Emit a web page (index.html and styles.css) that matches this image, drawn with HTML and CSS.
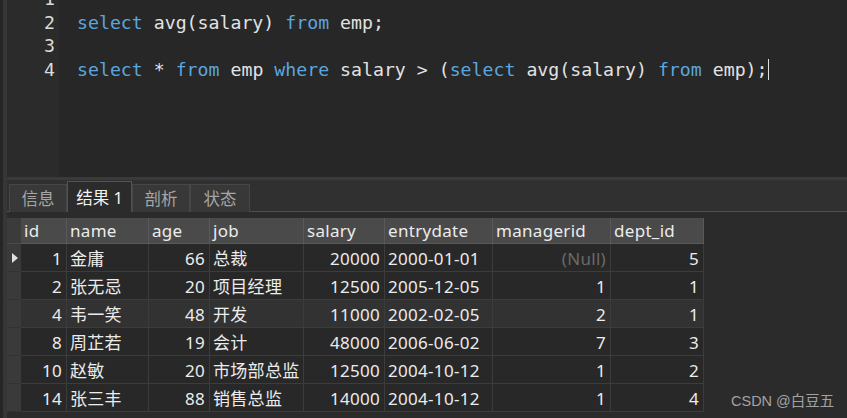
FILE: index.html
```html
<!DOCTYPE html>
<html>
<head>
<meta charset="utf-8">
<link rel="stylesheet" href="styles.css">
</head>
<body>
<div class="app">
  <div class="strip"></div>
  <div class="main">
    <div class="editor">
      <div class="gutter">
        <div class="ln">1</div>
        <div class="ln">2</div>
        <div class="ln">3</div>
        <div class="ln">4</div>
      </div>
      <div class="code">
        <div class="line"></div>
        <div class="line"><span class="kw">select</span> avg(salary) <span class="kw">from</span> emp;</div>
        <div class="line"></div>
        <div class="line"><span class="kw">select</span> * <span class="kw">from</span> emp <span class="kw">where</span> salary &gt; (<span class="kw">select</span> avg(salary) <span class="kw">from</span> emp);<span class="cursor"></span></div>
      </div>
    </div>
    <div class="sep"></div>
    <div class="tabbar">
      <div class="tab t1">信息</div>
      <div class="tab active t2">结果 1</div>
      <div class="tab t3">剖析</div>
      <div class="tab t4">状态</div>
    </div>
    <div class="results">
      <div class="grid">
        <div class="rh hdr"></div>
        <div class="c hdr">id</div>
        <div class="c hdr">name</div>
        <div class="c hdr">age</div>
        <div class="c hdr">job</div>
        <div class="c hdr">salary</div>
        <div class="c hdr">entrydate</div>
        <div class="c hdr">managerid</div>
        <div class="c hdr">dept_id</div>

        <div class="rh"><span class="ptr"></span></div>
        <div class="c r">1</div><div class="c">金庸</div><div class="c r">66</div><div class="c">总裁</div><div class="c r">20000</div><div class="c">2000-01-01</div><div class="c r null">(Null)</div><div class="c r">5</div>

        <div class="rh"></div>
        <div class="c r">2</div><div class="c">张无忌</div><div class="c r">20</div><div class="c">项目经理</div><div class="c r">12500</div><div class="c">2005-12-05</div><div class="c r">1</div><div class="c r">1</div>

        <div class="rh"></div>
        <div class="c r hl">4</div><div class="c hl">韦一笑</div><div class="c r hl">48</div><div class="c hl">开发</div><div class="c r hl">11000</div><div class="c hl">2002-02-05</div><div class="c r hl">2</div><div class="c r hl">1</div>

        <div class="rh"></div>
        <div class="c r">8</div><div class="c">周芷若</div><div class="c r">19</div><div class="c">会计</div><div class="c r">48000</div><div class="c">2006-06-02</div><div class="c r">7</div><div class="c r">3</div>

        <div class="rh"></div>
        <div class="c r">10</div><div class="c">赵敏</div><div class="c r">20</div><div class="c">市场部总监</div><div class="c r">12500</div><div class="c">2004-10-12</div><div class="c r">1</div><div class="c r">2</div>

        <div class="rh"></div>
        <div class="c r">14</div><div class="c">张三丰</div><div class="c r">88</div><div class="c">销售总监</div><div class="c r">14000</div><div class="c">2004-10-12</div><div class="c r">1</div><div class="c r">4</div>
      </div>
    </div>
  </div>
  <div class="watermark">CSDN @白豆五</div>
</div>
</body>
</html>
```

FILE: styles.css
```css
* { box-sizing: border-box; }
html, body {
  margin: 0;
  padding: 0;
  background: #2b2b2b;
}
.app {
  position: relative;
  width: 847px;
  height: 418px;
  overflow: hidden;
  display: flex;
  background: #2b2b2b;
}
.strip {
  width: 7px;
  flex: none;
  background: linear-gradient(to right, #262626 0, #262626 3px, #363636 3px, #363636 7px);
}
.main {
  flex: 1;
  display: flex;
  flex-direction: column;
}
.editor {
  height: 177px;
  display: flex;
  overflow: hidden;
  font-family: "DejaVu Sans Mono", "Liberation Mono", monospace;
  font-size: 18.22px;
}
.gutter {
  width: 52px;
  flex: none;
  background: #2b2b2b;
  padding-right: 4px;
  text-align: right;
  color: #dcdcdc;
}
.gutter .ln:first-child, .code .line:first-child {
  margin-top: -13px;
}
.ln, .line {
  height: 23.5px;
  line-height: 23.5px;
  white-space: pre;
}
.code {
  flex: 1;
  background: #272727;
  padding-left: 18px;
  color: #e2e2e2;
}
.kw { color: #5ba6de; }
.cursor {
  display: inline-block;
  width: 1px;
  height: 21px;
  background: #e0e0e0;
  vertical-align: middle;
  margin-top: -3px;
}
.sep {
  height: 3px;
  background: #3a3a3a;
}
.tabbar {
  height: 32px;
  background: #303030;
  border-bottom: 1px solid #505050;
  display: flex;
  align-items: flex-end;
  padding-left: 2px;
  font-family: "Noto Sans", "Noto Sans CJK SC", sans-serif;
  font-size: 16.5px;
}
.tab {
  height: 28px;
  margin-bottom: -1px;
  background: #383838;
  border: 1px solid #474747;
  border-bottom: none;
  color: #a6a6a6;
  display: flex;
  align-items: center;
  justify-content: center;
  line-height: 1;
  padding-top: 1px;
}
.t1 { width: 58px; }
.t2 { width: 65px; }
.t3 { width: 58px; }
.t4 { width: 60px; }
.tab.active {
  height: 32px;
  margin-bottom: -2px;
  background: #2b2b2b;
  border-color: #525252;
  color: #f2f2f2;
}
.results {
  flex: 1;
  padding-top: 6px;
  background: #2b2b2b;
}
.grid {
  display: grid;
  grid-template-columns: 14px 46px 82px 61px 94px 81px 108px 118px 93px;
  grid-template-rows: 26px repeat(6, 28px);
  width: 697px;
  font-family: "Noto Sans", "Noto Sans CJK SC", sans-serif;
  font-size: 17px;
  letter-spacing: 0.3px;
  color: #ececec;
}
.c {
  background: #282828;
  border-right: 1px solid #3c3c3c;
  border-bottom: 1px solid #3c3c3c;
  padding: 2px 4px 0 3px;
  display: flex;
  align-items: center;
  line-height: 1;
  white-space: nowrap;
}
.c.r { justify-content: flex-end; }
.c.hl { background: #323232; }
.c.hdr {
  background: #4a4a4a;
  border-right-color: #5a5a5a;
  border-bottom-color: #585858;
  padding-top: 0;
}
.null { color: #6a6a6a; }
.rh {
  background: #3a3a3a;
  border-bottom: 1px solid #333333;
  display: flex;
  align-items: center;
  justify-content: center;
}
.rh.hdr {
  background: #3b3b3b;
  border-bottom-color: #4a4a4a;
}
.ptr {
  width: 0;
  height: 0;
  border-top: 5px solid transparent;
  border-bottom: 5px solid transparent;
  border-left: 6px solid #e0e0e0;
  margin-left: 2px;
}
.watermark {
  position: absolute;
  left: 731px;
  top: 392px;
  font-family: "Liberation Sans", "Noto Sans CJK SC", sans-serif;
  font-size: 14.5px;
  color: #a2a2a2;
  line-height: 18px;
}
```
